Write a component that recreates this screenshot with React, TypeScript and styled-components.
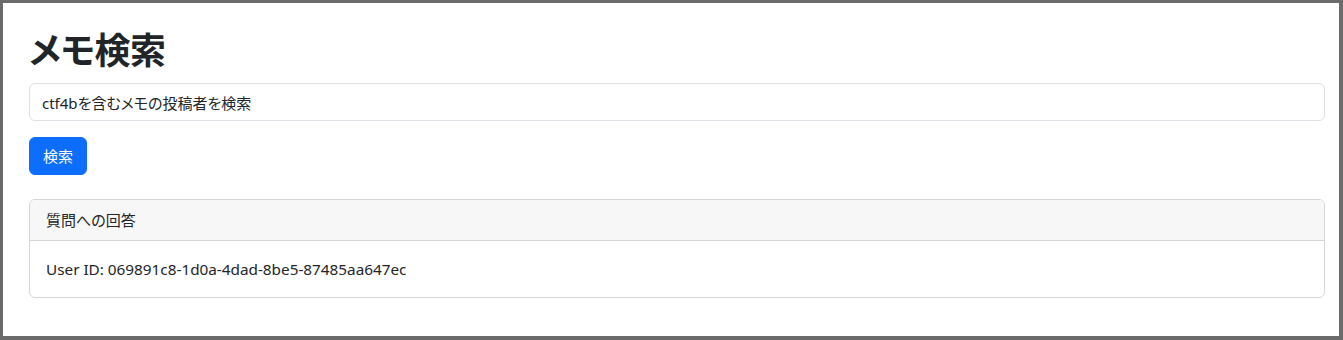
import React, { useState } from "react";
import styled, { createGlobalStyle } from "styled-components";

const GlobalStyle = createGlobalStyle`
  html, body {
    margin: 0;
    padding: 0;
    height: 100%;
    background: #ffffff;
  }
  #root {
    height: 100%;
  }
  * {
    box-sizing: border-box;
  }
`;

const Frame = styled.div`
  height: 340px;
  border-style: solid;
  border-color: #6b6b6b;
  border-width: 3px 4px 4px 3px;
  background: #ffffff;
  color: #212529;
  font-family: "Noto Sans", "Noto Sans CJK JP", sans-serif;
  font-feature-settings: "palt";
  font-size: 15px;
  line-height: 24px;
`;

const Page = styled.main`
  display: flex;
  flex-direction: column;
  align-items: flex-start;
  padding: 24px 14px 0 26px;
`;

const Title = styled.h1`
  margin: 0 0 8px;
  font-size: 36px;
  font-weight: 700;
  line-height: 48px;
  letter-spacing: -0.4px;
`;

const SearchInput = styled.input`
  display: block;
  width: 100%;
  height: 38px;
  padding: 6px 12px;
  font: inherit;
  color: #212529;
  background: #ffffff;
  border: 1px solid #dee2e6;
  border-radius: 6px;
  outline: none;
`;

const Button = styled.button`
  margin-top: 16px;
  height: 38px;
  padding: 6px 13px;
  font: inherit;
  color: #ffffff;
  background: #0d6efd;
  border: 1px solid #0d6efd;
  border-radius: 6px;
  cursor: pointer;
`;

const Card = styled.section`
  align-self: stretch;
  margin-top: 24px;
  border: 1px solid #d6d6d6;
  border-radius: 6px;
  overflow: hidden;
`;

const CardHeader = styled.div`
  padding: 8px 16px;
  background: #f7f7f7;
  border-bottom: 1px solid #d6d6d6;
`;

const CardBody = styled.div`
  padding: 16px;
  font-size: 15.3px;
`;

export default function App() {
  const [query, setQuery] = useState("ctf4bを含むメモの投稿者を検索");
  return (
    <>
      <GlobalStyle />
      <Frame>
        <Page>
          <Title>メモ検索</Title>
          <SearchInput value={query} onChange={(e) => setQuery(e.target.value)} />
          <Button type="button">検索</Button>
          <Card>
            <CardHeader>質問への回答</CardHeader>
            <CardBody>User ID: 069891c8-1d0a-4dad-8be5-87485aa647ec</CardBody>
          </Card>
        </Page>
      </Frame>
    </>
  );
}
